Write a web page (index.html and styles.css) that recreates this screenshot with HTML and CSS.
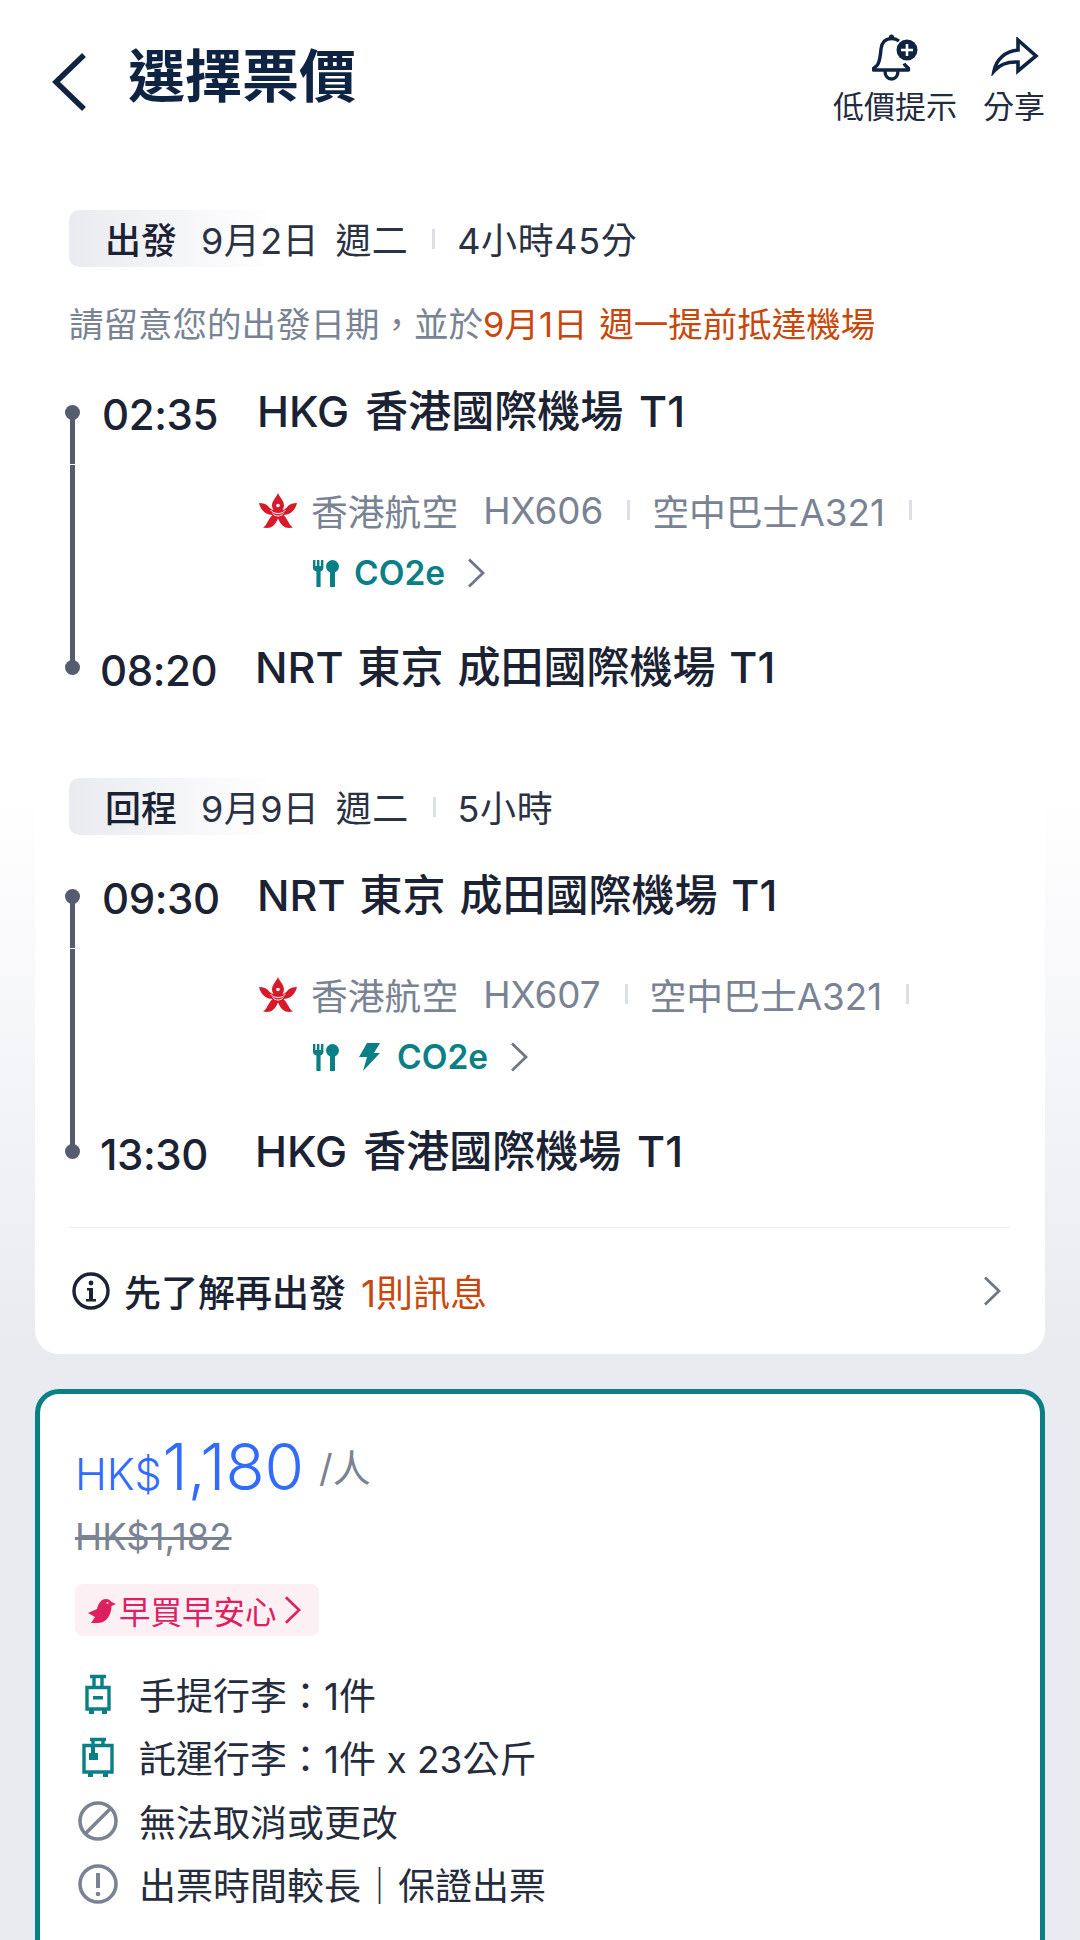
FILE: index.html
```html
<!DOCTYPE html>
<html lang="zh-Hant">
  <head>
    <meta charset="UTF-8" />
    <meta name="viewport" content="width=device-width, initial-scale=1.0" />
    <title>選擇票價</title>
    <link rel="stylesheet" href="styles.css">
  </head>
  <body>
    <svg class="defs" width="0" height="0">
      <symbol id="hx-logo" viewBox="0 0 38 35">
        <path fill="#d7192a" d="M19 0c1.500 4 6 7.500 6 12.500 0 1.500-.5 3-1.500 4.500 2.500-.5 4-2 5.500-4 2-2 5-3 9-3-1 4.500-3.500 8-6.500 10-2 1.300-4.500 2-7 2 2 2 3.500 4.500 5 7 1 2 2 4 4.500 5.500-4 1-8 .5-10.500-2-2-2-3.500-4.500-4.500-7-1 2.500-2.500 5-4.500 7-2.500 2.500-6.500 3-10.500 2 2.500-1.500 3.500-3.500 4.500-5.500 1.500-2.500 3-5 5-7-2.500 0-5-.7-7-2-3-2-5.500-5.500-6.500-10 4 0 7 1 9 3 1.500 2 3 3.500 5.500 4-1-1.500-1.500-3-1.500-4.500C13 7.500 17.500 4 19 0z"/>
        <path fill="none" stroke="#fff" stroke-width="1" d="M11.500 17c2 2.500 4.500 3.500 7.500 3.500s5.500-1 7.500-3.500M13.500 20.500c1.500 1.500 3.500 2.500 5.500 2.500s4-1 5.500-2.500"/>
        <circle cx="19" cy="12.500" r="1.800" fill="#fff"/>
      </symbol>
      <symbol id="meal" viewBox="0 0 26 27">
        <path fill="currentColor" d="M0 0h2.400v6h1.500V0h2.500v6h1.500V0h2.500v8c0 2-1.300 3-2.800 3.500V27H3.400V11.500C1.500 11 0 10 0 8z"/>
        <circle cx="19.500" cy="6.500" r="6.500" fill="currentColor"/>
        <rect x="17" y="10" width="5" height="17" fill="currentColor"/>
      </symbol>
      <symbol id="chev" viewBox="0 0 18 30">
        <path fill="none" stroke="currentColor" stroke-width="2.800" d="M2 1.500L16 15 2 28.500"/>
      </symbol>
    </svg>

    <header class="top">
      <svg class="back" viewBox="0 0 36 60"><path fill="none" stroke="#0f2342" stroke-width="5.500" d="M33 3L5 30l28 27"/></svg>
      <h1>選擇票價</h1>
      <div class="top-action act-alert">
        <svg class="ic-bell" viewBox="0 0 46 47">
          <path fill="none" stroke="#0f2342" stroke-width="3.400" stroke-linejoin="round" d="M27 7c-2-1.500-4-2.500-7-2.500C13 4.500 9.500 9 9 15c-.5 6-1 11-3 15-1 2-3 3-4.500 4.500v1.500h35v-1.500c-2-2-3.500-3-4.500-5"/>
          <path fill="none" stroke="#0f2342" stroke-width="3.400" d="M13 37c0 5 3 8 6.500 8s6.500-3 6.500-8"/>
          <circle cx="19.500" cy="3" r="2.600" fill="#0f2342"/>
          <circle cx="35" cy="16" r="10.500" fill="#0f2342"/>
          <path stroke="#fff" stroke-width="2.600" d="M35 10v12M29 16h12"/>
        </svg>
        <span>低價提示</span>
      </div>
      <div class="top-action act-share">
        <svg class="ic-share" viewBox="0 0 49 39">
          <path fill="none" stroke="#0f2342" stroke-width="3.600" stroke-linejoin="miter" d="M28 3l18 16-18 15V25c-10-.5-18 2-24 9 2-11 11-20 24-21z"/>
        </svg>
        <span>分享</span>
      </div>
    </header>

    <section class="panel">
      <div class="leg-head">
        <b class="tag">出發</b>
        <span class="when">9月2日 週二</span>
        <i class="sep"></i>
        <span class="dur">4小時45分</span>
      </div>
      <p class="notice">請留意您的出發日期，並於<em>9月1日 週一提前抵達機場</em></p>

      <div class="leg">
        <div class="rail"><i></i></div>
        <div class="stop">
          <span class="time">02:35</span>
          <span class="place">HKG 香港國際機場 T1</span>
        </div>
        <div class="flight">
          <div class="carrier">
            <svg class="hx"><use href="#hx-logo"/></svg>
            <span>香港航空</span>
            <span class="no">HX606</span>
            <i class="sep"></i>
            <span class="craft">空中巴士A321</span>
            <i class="sep"></i>
          </div>
          <div class="extras">
            <svg class="meal"><use href="#meal"/></svg>
            <b>CO2e</b>
            <svg class="chev"><use href="#chev"/></svg>
          </div>
        </div>
        <div class="stop stop-end">
          <span class="time">08:20</span>
          <span class="place place-tight">NRT 東京 成田國際機場 T1</span>
        </div>
      </div>

      <div class="leg-head leg-head-back">
        <b class="tag">回程</b>
        <span class="when">9月9日 週二</span>
        <i class="sep"></i>
        <span class="dur">5小時</span>
      </div>

      <div class="leg leg-back">
        <div class="rail"><i></i></div>
        <div class="stop">
          <span class="time">09:30</span>
          <span class="place place-tight">NRT 東京 成田國際機場 T1</span>
        </div>
        <div class="flight">
          <div class="carrier">
            <svg class="hx"><use href="#hx-logo"/></svg>
            <span>香港航空</span>
            <span class="no">HX607</span>
            <i class="sep"></i>
            <span class="craft">空中巴士A321</span>
            <i class="sep"></i>
          </div>
          <div class="extras">
            <svg class="meal"><use href="#meal"/></svg>
            <svg class="bolt" viewBox="0 0 21 28"><path fill="currentColor" d="M8 0h13l-6 10h6L4 28l4-14H0z"/></svg>
            <b>CO2e</b>
            <svg class="chev"><use href="#chev"/></svg>
          </div>
        </div>
        <div class="stop stop-end">
          <span class="time">13:30</span>
          <span class="place">HKG 香港國際機場 T1</span>
        </div>
      </div>

      <div class="info-row">
        <svg class="ic-info" viewBox="0 0 38 38">
          <circle cx="19" cy="19" r="17" fill="none" stroke="#1b2233" stroke-width="3.400"/>
          <circle cx="19" cy="11" r="2.400" fill="#1b2233"/>
          <path fill="#1b2233" d="M15 16h6v11h3v2.500H14V27h3v-8.500h-2z"/>
        </svg>
        <b>先了解再出發</b>
        <em>1則訊息</em>
        <svg class="chev chev-info"><use href="#chev"/></svg>
      </div>
    </section>

    <section class="fare">
      <div class="price">
        <span class="cur">HK$</span><span class="amount">1,180</span><span class="per">/人</span>
      </div>
      <s class="was">HK$1,182</s>
      <div class="promo">
        <svg class="bird" viewBox="0 0 28 25">
          <path fill="#dd2060" d="M28 6l-4.500 2C23.500 16 19 25 10 25H3l4-6-7-4 9-4C10 6 13 1 18 1c3 0 5 2 5.500 3z"/>
          <circle cx="19.500" cy="5" r="1" fill="#fdf0f4"/>
        </svg>
        <span>早買早安心</span>
        <svg class="chev chev-promo"><use href="#chev"/></svg>
      </div>
      <ul class="perks">
        <li>
          <span class="perk-ic">
            <svg width="26" height="40" viewBox="0 0 26 40">
              <path fill="none" stroke="#0b7f86" stroke-width="3.400" d="M5 2.500h16M9 2.500v11M17 2.500v11M2 13.500h22V35H2z"/>
              <path fill="#0b7f86" d="M8 22h10v3.500H8zM4 35h5v5H4zM17 35h5v5h-5z"/>
            </svg>
          </span>
          <span>手提行李：1件</span>
        </li>
        <li>
          <span class="perk-ic">
            <svg width="32" height="40" viewBox="0 0 32 40">
              <path fill="none" stroke="#0b7f86" stroke-width="3.400" d="M8 2.500h16M11 2.500v6M21 2.500v6M2 8.500h28V35H2z"/>
              <path fill="#0b7f86" d="M9 10h4v6h3v7H7v-7h2zM6 35h5v5H6zM21 35h5v5h-5z"/>
            </svg>
          </span>
          <span>託運行李：1件 x 23公斤</span>
        </li>
        <li>
          <span class="perk-ic">
            <svg width="40" height="40" viewBox="0 0 40 40">
              <circle cx="20" cy="20" r="18" fill="none" stroke="#7a8394" stroke-width="3.600"/>
              <path stroke="#7a8394" stroke-width="3.600" d="M7.500 32.500l25-25"/>
            </svg>
          </span>
          <span>無法取消或更改</span>
        </li>
        <li>
          <span class="perk-ic">
            <svg width="40" height="40" viewBox="0 0 40 40">
              <circle cx="20" cy="20" r="18" fill="none" stroke="#7a8394" stroke-width="3.600"/>
              <path fill="#7a8394" d="M18 9h4v15h-4z"/>
              <circle cx="20" cy="30" r="2.300" fill="#7a8394"/>
            </svg>
          </span>
          <span>出票時間較長｜保證出票</span>
        </li>
      </ul>
    </section>
  </body>
</html>
```
FILE: styles.css
```css
html,
body {
  margin: 0;
  padding: 0;
}
body {
  width: 1080px;
  height: 1940px;
  overflow: hidden;
  font-family: Inter, "Noto Sans CJK TC", sans-serif;
  color: #1b2233;
  background: linear-gradient(#fff 0, #fff 790px, #e9ebf0 1340px);
}
em {
  font-style: normal;
  color: #c8480c;
}
.defs {
  display: block;
}

/* top bar */
.top {
  height: 150px;
  display: flex;
  align-items: flex-start;
}
.back {
  width: 36px;
  height: 60px;
  margin: 52px 0 0 51px;
  flex: none;
}
.top h1 {
  margin: 42px auto 0 41px;
  font-size: 57px;
  line-height: 70px;
  font-weight: 700;
  color: #0f2342;
}
.top-action {
  display: flex;
  flex-direction: column;
  align-items: center;
  margin-top: 34px;
  font-size: 31px;
  line-height: 40px;
  color: #222b40;
  white-space: nowrap;
}
.act-alert {
  width: 126px;
}
.act-share {
  width: 62px;
  margin: 34px 35px 0 25px;
}
.ic-bell {
  width: 46px;
  height: 47px;
  margin-bottom: 6px;
}
.ic-share {
  width: 49px;
  height: 39px;
  margin: 3px 0 11px;
}

/* itinerary panel */
.panel {
  width: 1010px;
  height: 1204px;
  margin-left: 35px;
  padding: 60px 35px 0 34px;
  box-sizing: border-box;
  background: #fff;
  border-radius: 0 0 24px 24px;
}
.leg-head {
  height: 57px;
  box-sizing: border-box;
  padding: 0 0 2px 36px;
  display: flex;
  align-items: center;
  font-size: 36px;
  color: #2b3244;
  border-radius: 10px;
  background: linear-gradient(90deg, #e9ebf0, #fff 205px);
}
.leg-head-back {
  margin-top: 82px;
}
.tag {
  margin-right: 24px;
  font-weight: 500;
  color: #1b2233;
}
.when {
  margin-right: 24px;
  word-spacing: 6px;
  letter-spacing: 0.4px;
}
.dur {
  letter-spacing: 0.6px;
}
.leg-head .sep {
  margin: 2px 22px 0 0;
}
.sep {
  display: inline-block;
  width: 3px;
  height: 20px;
  background: #dcdfe5;
  flex: none;
}
.notice {
  margin: 33px 0 0;
  font-size: 34.5px;
  line-height: 50px;
  color: #7a8394;
  white-space: nowrap;
  word-spacing: 2px;
}
.leg {
  margin-top: 34px;
  height: 312px;
  display: grid;
  grid-template-columns: 33px 1fr;
  grid-template-rows: 56px 200px 56px;
}
.leg-back {
  margin-top: 33px;
}
.rail {
  grid-row: 1 / 4;
  display: flex;
}
.rail i {
  display: block;
  width: 5px;
  margin: 28px 0 28px 1px;
  background: linear-gradient(#565c70 52px, #fff 52px, #fff 53px, #565c70 53px);
  position: relative;
}
.rail i::before,
.rail i::after {
  content: "";
  position: absolute;
  left: -5px;
  width: 15px;
  height: 15px;
  border-radius: 50%;
  background: #565c70;
}
.rail i::before {
  top: -7px;
}
.rail i::after {
  bottom: -7px;
}
.stop {
  display: flex;
  align-items: center;
  height: 56px;
}
.stop-end {
  margin-left: -2px;
}
.time {
  width: 155px;
  margin-top: 4px;
  flex: none;
  font-size: 42px;
  font-weight: 500;
  letter-spacing: -0.4px;
  color: #1b2233;
}
.place {
  margin-bottom: 8px;
  font-size: 43px;
  font-weight: 500;
  color: #1b2233;
  white-space: nowrap;
  word-spacing: 4.5px;
}
.place-tight {
  word-spacing: 2.5px;
}
.flight {
  padding-left: 157px;
}
.carrier {
  display: flex;
  align-items: center;
  height: 50px;
  margin-top: 45px;
  font-size: 36.8px;
  color: #7a8394;
  white-space: nowrap;
}
.hx {
  width: 38px;
  height: 35px;
  margin-right: 14px;
  flex: none;
}
.no {
  margin-left: 25px;
  margin-right: 24px;
}
.craft {
  margin-left: 22px;
  margin-right: 24px;
}
.extras {
  display: flex;
  align-items: center;
  height: 50px;
  margin-top: 13px;
  padding-left: 54px;
  color: #0b7f86;
  font-size: 33.5px;
}
.extras b {
  font-weight: 600;
}
.meal {
  width: 26px;
  height: 27px;
  margin-right: 15px;
}
.bolt {
  width: 21px;
  height: 28px;
  margin: 0 17px 0 5px;
}
.chev {
  width: 18px;
  height: 30px;
  color: #6f7688;
  margin-left: 22px;
}

/* info row */
.info-row {
  margin-top: 47px;
  border-top: 1px solid #eceef1;
  height: 126px;
  display: flex;
  align-items: center;
  font-size: 37px;
}
.info-row b {
  font-weight: 500;
  margin: 0 15px 0 14px;
}
.ic-info {
  width: 38px;
  height: 38px;
  margin-left: 3px;
}
.chev-info {
  width: 20px;
  margin-left: auto;
  margin-right: 8px;
}

/* fare card */
.fare {
  width: 1010px;
  height: 551px;
  margin: 35px 0 0 35px;
  box-sizing: border-box;
  padding: 34px 35px 0;
  background: #fff;
  border: 5px solid #0b7f86;
  border-bottom: 0;
  border-radius: 24px 24px 0 0;
}
.price {
  display: flex;
  align-items: baseline;
  height: 68px;
  color: #326bff;
}
.cur {
  font-size: 43px;
  font-weight: 300;
}
.amount {
  font-size: 64px;
  font-weight: 300;
  margin-left: 1px;
}
.per {
  align-self: flex-start;
  margin: 18px 0 0 15px;
  font-size: 38px;
  line-height: 44px;
  color: #7a8394;
}
.was {
  display: block;
  margin-top: 18px;
  font-size: 36.5px;
  line-height: 46px;
  color: #7a8394;
}
.promo {
  display: flex;
  align-items: center;
  width: 244px;
  height: 52px;
  margin-top: 24px;
  box-sizing: border-box;
  padding-left: 13px;
  font-size: 31.5px;
  color: #dd2060;
  background: #fdf0f4;
  border-radius: 8px;
}
.bird {
  width: 28px;
  height: 25px;
  margin-right: 3px;
}
.chev-promo {
  color: #dd2060;
  margin-left: 7px;
  width: 17px;
}
.perks {
  list-style: none;
  margin: 26px 0 0;
  padding: 0;
}
.perks li {
  display: flex;
  align-items: center;
  height: 63.5px;
  font-size: 37px;
  color: #252c3d;
}
.perk-ic {
  width: 64px;
  margin-left: -9px;
  margin-right: 9px;
  display: flex;
  justify-content: center;
  flex: none;
}
```
